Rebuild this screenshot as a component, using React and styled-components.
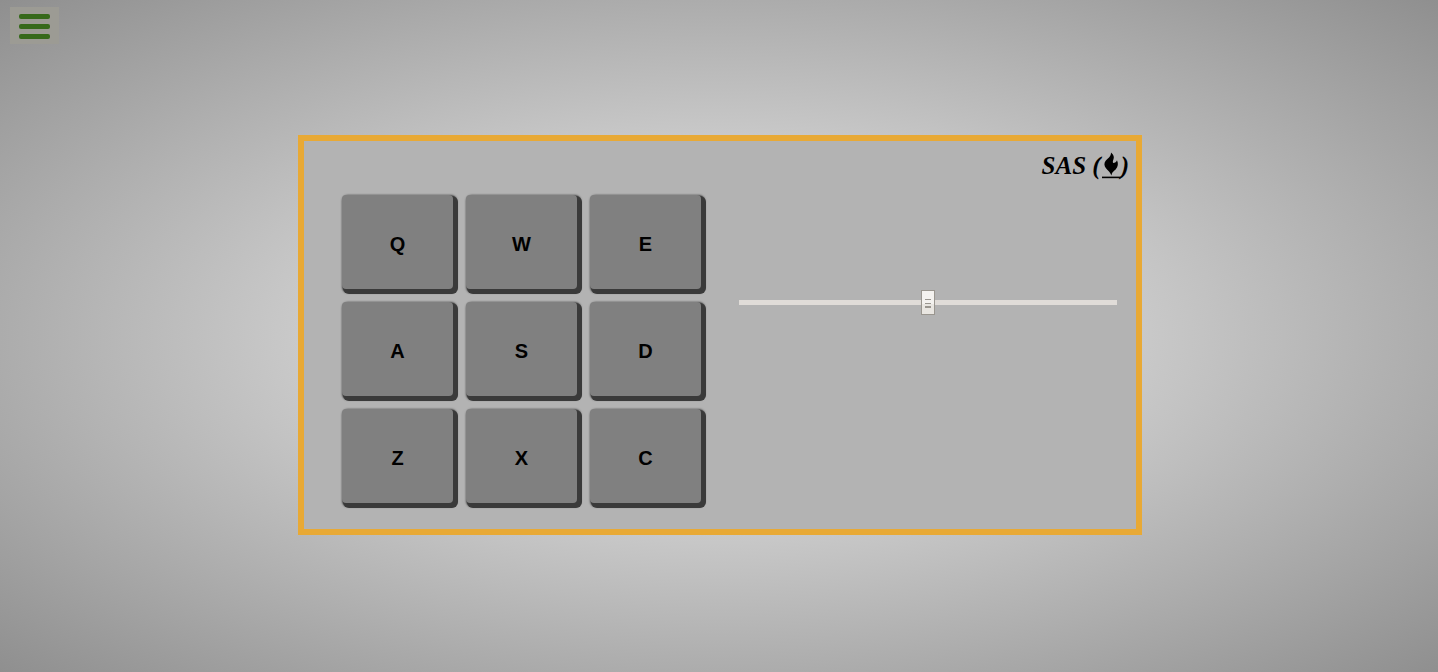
import React, { useState } from "react";
import styled, { createGlobalStyle } from "styled-components";

const GlobalStyle = createGlobalStyle`
  *, *::before, *::after { box-sizing: border-box; }
  body { margin: 0; }
`;

const Page = styled.div`
  min-height: 100vh;
  display: grid;
  grid-template-rows: 1fr auto 1fr;
  justify-items: center;
  padding: 0 0 2px 2px;
  background: radial-gradient(#f2f2f2, #8f8f8f);
`;

const TopBar = styled.header`
  justify-self: start;
  padding: 7px 8px;
`;

const MenuButton = styled.button`
  display: flex;
  flex-direction: column;
  gap: 5px;
  width: 49px;
  padding: 7px 9px 5px;
  border: 0;
  background: #9c9b94;
  cursor: pointer;
`;

const MenuBar = styled.span`
  height: 5px;
  border-radius: 2px;
  background: #36691a;
`;

const Machine = styled.main`
  width: min(844px, 100%);
  border: 6px solid #e8a935;
  background: #b3b3b3;
  padding: 0 19px 26px 38px;
`;

const Brand = styled.div`
  display: flex;
  justify-content: flex-end;
  align-items: center;
  height: 54px;
  margin-right: -12px;
  padding-bottom: 4px;
  font: italic bold 25px/28px "Liberation Serif", serif;
  white-space: pre;
  color: #000;
`;

const Flame = styled.svg`
  width: 20px;
  height: 28px;
`;

const Controls = styled.div`
  display: flex;
  flex-wrap: wrap;
  gap: 38px;
`;

const Pads = styled.div`
  display: grid;
  grid-template-columns: repeat(3, 111px);
  grid-auto-rows: 94px;
  gap: 13px;
`;

const Pad = styled.button`
  padding: 4px 0 0;
  border: 0;
  border-radius: 4px;
  background: #808080;
  box-shadow: 3px 3px 0 2px #3a3a3a, 2px 2px 2px 2px #3a3a3a;
  font: bold 20px "Liberation Sans", sans-serif;
  color: #000;
  cursor: pointer;
`;

const Volume = styled.input`
  appearance: none;
  flex: 1;
  min-width: 120px;
  height: 25px;
  margin: 95px 0 0;
  background: transparent;

  &::-webkit-slider-runnable-track {
    height: 5px;
    background: #e0dcd8;
  }

  &::-webkit-slider-thumb {
    appearance: none;
    width: 14px;
    height: 25px;
    margin-top: -10px;
    border: 1px solid #9a968f;
    background:
      linear-gradient(#9a968f, #9a968f) 3px 8px / 6px 1px no-repeat,
      linear-gradient(#9a968f, #9a968f) 3px 12px / 6px 1px no-repeat,
      linear-gradient(#9a968f, #9a968f) 3px 15px / 6px 2px no-repeat,
      linear-gradient(#f4f2ef 55%, #e9e6e1 55%);
  }
`;

const KEYS = ["Q", "W", "E", "A", "S", "D", "Z", "X", "C"];

export default function App() {
  const [volume, setVolume] = useState(50);
  return (
    <>
      <GlobalStyle />
      <Page>
        <TopBar>
          <MenuButton type="button" aria-label="Menu">
            <MenuBar />
            <MenuBar />
            <MenuBar />
          </MenuButton>
        </TopBar>
        <Machine>
          <Brand>
            <span>SAS (</span>
            <Flame viewBox="0 0 20 28" aria-hidden="true">
              <path d="M10 0.5C12.8 2.8 13.4 5.2 12.4 7.6C11.8 9.2 11.6 10.2 12.2 11C14 11 15.6 9.6 16 8.2C17.6 11.4 17 14.8 14.8 17.2C13 19.2 10.6 20.2 10.6 23.4C9.8 22.4 9.6 21 8 19.4C5.6 17.2 3.4 15 3.4 12.2C3.4 9.2 5.8 7.4 8 5.4C9.6 3.8 10 2.2 10 0.5Z" />
              <path d="M1 24.6H20V26.2H1Z" />
            </Flame>
            <span>)</span>
          </Brand>
          <Controls>
            <Pads>
              {KEYS.map((key) => (
                <Pad key={key} type="button">{key}</Pad>
              ))}
            </Pads>
            <Volume
              type="range"
              min="0"
              max="100"
              aria-label="Volume"
              value={volume}
              onChange={(event) => setVolume(Number(event.target.value))}
            />
          </Controls>
        </Machine>
      </Page>
    </>
  );
}
